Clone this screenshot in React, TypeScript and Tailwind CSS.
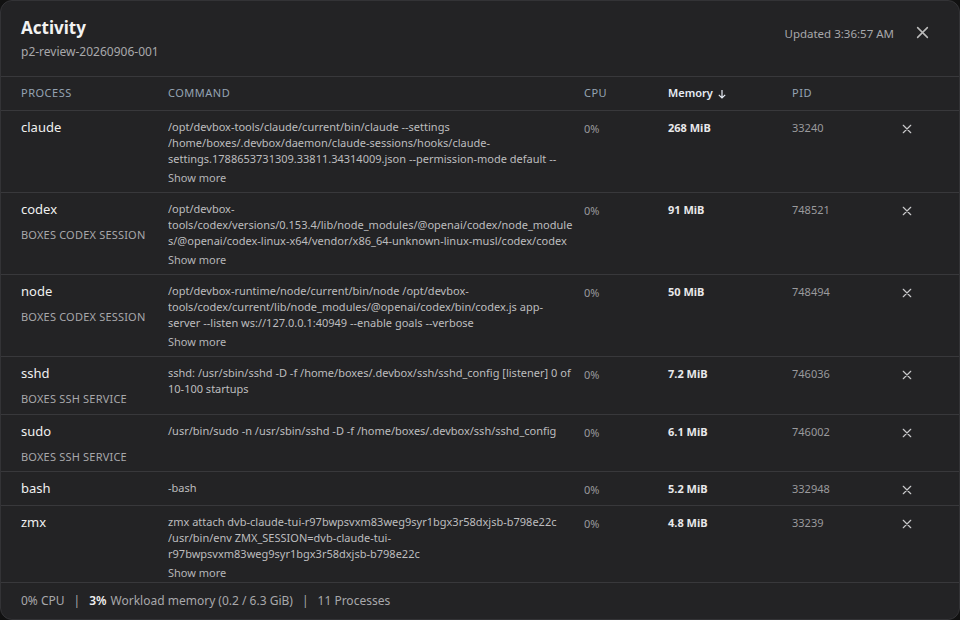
import React from "react";

const rows = [
  { name: "claude", sub: "", cmd: "/opt/devbox-tools/claude/current/bin/claude --settings /home/boxes/.devbox/daemon/claude-sessions/hooks/claude-settings.1788653731309.33811.34314009.json --permission-mode default --verbose", more: true, mem: "268 MiB", pid: "33240" },
  { name: "codex", sub: "BOXES CODEX SESSION", cmd: "/opt/devbox-tools/codex/versions/0.153.4/lib/node_modules/@openai/codex/node_modules/@openai/codex-linux-x64/vendor/x86_64-unknown-linux-musl/codex/codex app-server", more: true, mem: "91 MiB", pid: "748521" },
  { name: "node", sub: "BOXES CODEX SESSION", cmd: "/opt/devbox-runtime/node/current/bin/node /opt/devbox-tools/codex/current/lib/node_modules/@openai/codex/bin/codex.js app-server --listen ws://127.0.0.1:40949 --enable goals --verbose", more: true, mem: "50 MiB", pid: "748494" },
  { name: "sshd", sub: "BOXES SSH SERVICE", cmd: "sshd: /usr/sbin/sshd -D -f /home/boxes/.devbox/ssh/sshd_config [listener] 0 of 10-100 startups", more: false, mem: "7.2 MiB", pid: "746036" },
  { name: "sudo", sub: "BOXES SSH SERVICE", cmd: "/usr/bin/sudo -n /usr/sbin/sshd -D -f /home/boxes/.devbox/ssh/sshd_config", more: false, mem: "6.1 MiB", pid: "746002" },
  { name: "bash", sub: "", cmd: "-bash", more: false, mem: "5.2 MiB", pid: "332948" },
  { name: "zmx", sub: "", cmd: "zmx attach dvb-claude-tui-r97bwpsvxm83weg9syr1bgx3r58dxjsb-b798e22c /usr/bin/env ZMX_SESSION=dvb-claude-tui-r97bwpsvxm83weg9syr1bgx3r58dxjsb-b798e22c", more: true, mem: "4.8 MiB", pid: "33239" },
  { name: "zsh", sub: "", cmd: "-zsh", more: false, mem: "4.1 MiB", pid: "33100" },
];

const X = ({ s = 12 }: { s?: number }) => (
  <svg width={s} height={s} viewBox="0 0 12 12" fill="none" stroke="currentColor" strokeWidth="1.4" strokeLinecap="round">
    <path d="M1.5 1.5l9 9M10.5 1.5l-9 9" />
  </svg>
);

export default function App() {
  const mono = "font-['Liberation_Mono']";
  return (
    <div className="w-[960px] h-[620px] bg-[#111] overflow-hidden font-['Noto_Sans']">
      <div className="w-full h-full bg-[#232325] rounded-[12px] border border-[#333336] flex flex-col overflow-hidden">
        <div className="h-[76px] shrink-0 flex justify-between px-5 pt-[16px] border-b border-[#38383b]">
          <div>
            <div className="text-[17px] font-bold text-[#f2f2f2] leading-[22px]">Activity</div>
            <div className="text-[12px] text-[#a8a8ab] mt-[4px]">p2-review-20260906-001</div>
          </div>
          <div className="flex items-start gap-[22px] pt-[8px] pr-[10px]">
            <span className="text-[11.5px] text-[#a8a8ab]">Updated 3:36:57 AM</span>
            <span className="text-[#bbb] mt-[1px]"><X s={13} /></span>
          </div>
        </div>
        <div className="flex-1 overflow-y-scroll [color-scheme:dark]">
          <div className="sticky top-0 bg-[#232325] h-[34px] flex items-center border-b border-[#38383b] text-[11px] tracking-[0.5px] text-[#95a3b3] px-5">
            <div className="w-[147px]">PROCESS</div>
            <div className="w-[416px]">COMMAND</div>
            <div className="w-[84px]">CPU</div>
            <div className="w-[124px] text-[#e6ecf5] font-semibold flex items-center gap-1 tracking-normal">Memory
              <svg width="10" height="10" viewBox="0 0 10 10" fill="none" stroke="currentColor" strokeWidth="1.2"><path d="M5 1v8M1.8 5.8L5 9l3.2-3.2" /></svg>
            </div>
            <div>PID</div>
          </div>
          {rows.map((r) => (
            <div key={r.name} className="flex border-b border-[#38383b] px-5 pt-[6px] pb-[6px]">
              <div className="w-[147px] shrink-0">
                <div className="text-[13px] text-[#f0f0f0] leading-[20px]">{r.name}</div>
                {r.sub && <div className="text-[11px] text-[#a8a8ab] mt-[8px] tracking-[0.2px]">{r.sub}</div>}
              </div>
              <div className="w-[416px] shrink-0 pt-[2px]">
                <div className={`${mono} w-[405px] text-[11px] leading-[16px] text-[#bdbdbf] [overflow-wrap:anywhere] ${r.more ? "max-h-[48px] overflow-hidden" : ""}`}>{r.cmd}</div>
                {r.more && <div className="text-[11px] text-[#b5b5b8] mt-[3px] leading-[16px]">Show more</div>}
              </div>
              <div className={`${mono} w-[84px] text-[11px] text-[#9a9a9d] pt-[4px]`}>0%</div>
              <div className={`${mono} w-[124px] text-[11px] font-bold text-[#e8e8ea] pt-[3px]`}>{r.mem}</div>
              <div className={`${mono} w-[110px] text-[11px] text-[#9a9a9d] pt-[3px]`}>{r.pid}</div>
              <div className="text-[#c8c8ca] pt-[7px]"><X s={10} /></div>
            </div>
          ))}
        </div>
        <div className="h-[37px] shrink-0 border-t border-[#38383b] flex items-center px-5 text-[12px] text-[#a8a8ab]">
          <span>0% CPU</span><span className="mx-[9px]">|</span>
          <span className="text-[#f0f0f0] font-semibold">3%</span><span className="ml-1">Workload memory (0.2 / 6.3 GiB)</span>
          <span className="mx-[9px]">|</span><span>11 Processes</span>
        </div>
      </div>
    </div>
  );
}
